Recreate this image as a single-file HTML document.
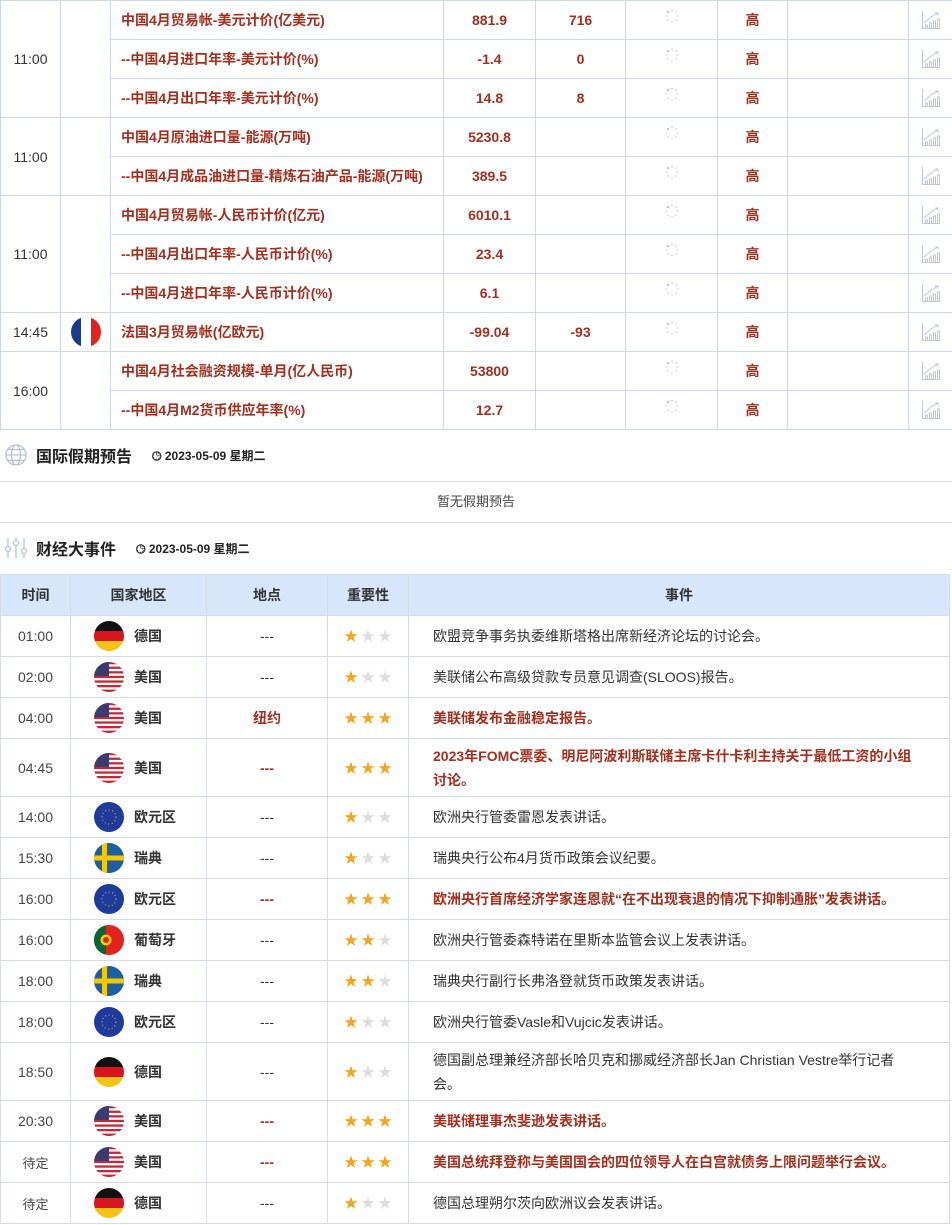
<!DOCTYPE html>
<html><head><meta charset="utf-8"><style>
*{margin:0;padding:0;box-sizing:border-box}
body{width:952px;height:1225px;overflow:hidden;background:#fff;font-family:"Liberation Sans","Noto Sans CJK SC",sans-serif;color:#333}
table{border-collapse:collapse;table-layout:fixed}
svg{vertical-align:middle}
.t1 td{border:1px solid #cdd7e6;height:39px;font-size:14px;text-align:center;color:#a3301f;font-weight:bold;padding:0;vertical-align:middle;line-height:16px}
.t1 td.n{text-align:left;padding-left:10px}
.t1 td.tm{color:#333;font-weight:normal;font-size:14px}
.t1 td svg{display:block;margin:0 auto}
.t1 td.sp svg{position:relative;top:-4px}
.t2 td,.t2 th{border:1px solid #d5dce6;font-size:14px;text-align:center;padding:0;vertical-align:middle}
.t2 th{background:#d6e6fb;height:41px;font-weight:bold;color:#333;font-size:14px}
.t2 td{height:41px}
.t2 td.tm{font-size:14px;color:#444}
.t2 td.ev{text-align:left;padding-left:24px;line-height:24px;padding-right:36px}
.t2 .r{color:#a3301f;font-weight:bold}
.cf{display:flex;align-items:center;padding-left:23px}
.fl{width:30px;height:30px;margin-right:10px;flex:none}
.cc{font-weight:bold;font-size:14px}
.st{font-size:16px;letter-spacing:3px;padding-left:3px!important}
.g{color:#f4a51c}.e{color:#ddd}
.hd{position:absolute;left:0;display:flex;align-items:center}
.hd b{font-size:16px;color:#222;margin-left:8px}
.hd span{font-size:12px;font-weight:bold;color:#222;margin-left:20px}
</style></head><body>
<svg width="0" height="0" style="position:absolute">
<defs>
<clipPath id="c"><circle cx="15" cy="15" r="15"/></clipPath>
<symbol id="de" viewBox="0 0 30 30"><g clip-path="url(#c)"><rect width="30" height="10" fill="#111"/><rect y="10" width="30" height="10" fill="#d8141c"/><rect y="20" width="30" height="10" fill="#f3c316"/></g></symbol>
<symbol id="us" viewBox="0 0 30 30"><g clip-path="url(#c)"><rect width="30" height="30" fill="#fff"/><rect y="0" width="30" height="2.3" fill="#c22a3a"/><rect y="4.6" width="30" height="2.3" fill="#c22a3a"/><rect y="9.2" width="30" height="2.3" fill="#c22a3a"/><rect y="13.8" width="30" height="2.3" fill="#c22a3a"/><rect y="18.4" width="30" height="2.3" fill="#c22a3a"/><rect y="23" width="30" height="2.3" fill="#c22a3a"/><rect y="27.6" width="30" height="2.4" fill="#c22a3a"/><rect width="15" height="14" fill="#3c3b6e"/></g></symbol>
<symbol id="eu" viewBox="0 0 30 30"><circle cx="15" cy="15" r="15" fill="#1d3a9c"/><circle cx="15" cy="15" r="7" fill="none" stroke="#f5d000" stroke-width="1" stroke-dasharray="1 2.6"/></symbol>
<symbol id="se" viewBox="0 0 30 30"><g clip-path="url(#c)"><rect width="30" height="30" fill="#1d5fa0"/><rect x="8" width="5" height="30" fill="#f6c800"/><rect y="12.5" width="30" height="5" fill="#f6c800"/></g></symbol>
<symbol id="pt" viewBox="0 0 30 30"><g clip-path="url(#c)"><rect width="30" height="30" fill="#e4211c"/><rect width="12" height="30" fill="#06683a"/><circle cx="12" cy="15" r="5.5" fill="#f5d000"/><circle cx="12" cy="15" r="3" fill="#e4211c"/></g></symbol>
<symbol id="fr" viewBox="0 0 30 30"><g clip-path="url(#c)"><rect width="10" height="30" fill="#1d3a8c"/><rect x="10" width="10" height="30" fill="#fff"/><rect x="20" width="10" height="30" fill="#e4211c"/></g></symbol>
<symbol id="sp" viewBox="0 0 14 14"><g fill="#c3ccd8"><circle cx="7" cy="1.5" r=".9"/><circle cx="11" cy="3" r=".8"/><circle cx="12.5" cy="7" r=".8"/><circle cx="11" cy="11" r=".8"/><circle cx="7" cy="12.5" r=".8"/><circle cx="3" cy="11" r=".8"/><circle cx="1.5" cy="7" r=".8"/><circle cx="3" cy="3" r=".9" fill="#8f9bb0"/></g></symbol>
<symbol id="ch" viewBox="0 0 20 20"><g fill="none" stroke="#bcc8da" stroke-width="1"><path d="M1.5 1V18.5H19"/><path d="M3 13L10 7L17 3M14 3H17V6"/><path d="M4.5 18V15H6.5V18M8.5 18V13H10.5V18M12.5 18V11H14.5V18M16.5 18V9H18.5V18"/></g></symbol>
</defs></svg>

<table class="t1" style="position:absolute;left:0;top:0;width:952px">
<colgroup><col style="width:60px"><col style="width:50px"><col style="width:333px"><col style="width:92px"><col style="width:90px"><col style="width:92px"><col style="width:70px"><col style="width:121px"><col style="width:44px"></colgroup>
<tr><td class="tm" rowspan="3">11:00</td><td rowspan="3"></td><td class="n">中国4月贸易帐-美元计价(亿美元)</td><td>881.9</td><td>716</td><td class="sp"><svg width="14" height="14"><use href="#sp"/></svg></td><td>高</td><td></td><td><svg width="20" height="20"><use href="#ch"/></svg></td></tr>
<tr><td class="n">--中国4月进口年率-美元计价(%)</td><td>-1.4</td><td>0</td><td class="sp"><svg width="14" height="14"><use href="#sp"/></svg></td><td>高</td><td></td><td><svg width="20" height="20"><use href="#ch"/></svg></td></tr>
<tr><td class="n">--中国4月出口年率-美元计价(%)</td><td>14.8</td><td>8</td><td class="sp"><svg width="14" height="14"><use href="#sp"/></svg></td><td>高</td><td></td><td><svg width="20" height="20"><use href="#ch"/></svg></td></tr>
<tr><td class="tm" rowspan="2">11:00</td><td rowspan="2"></td><td class="n">中国4月原油进口量-能源(万吨)</td><td>5230.8</td><td></td><td class="sp"><svg width="14" height="14"><use href="#sp"/></svg></td><td>高</td><td></td><td><svg width="20" height="20"><use href="#ch"/></svg></td></tr>
<tr><td class="n">--中国4月成品油进口量-精炼石油产品-能源(万吨)</td><td>389.5</td><td></td><td class="sp"><svg width="14" height="14"><use href="#sp"/></svg></td><td>高</td><td></td><td><svg width="20" height="20"><use href="#ch"/></svg></td></tr>
<tr><td class="tm" rowspan="3">11:00</td><td rowspan="3"></td><td class="n">中国4月贸易帐-人民币计价(亿元)</td><td>6010.1</td><td></td><td class="sp"><svg width="14" height="14"><use href="#sp"/></svg></td><td>高</td><td></td><td><svg width="20" height="20"><use href="#ch"/></svg></td></tr>
<tr><td class="n">--中国4月出口年率-人民币计价(%)</td><td>23.4</td><td></td><td class="sp"><svg width="14" height="14"><use href="#sp"/></svg></td><td>高</td><td></td><td><svg width="20" height="20"><use href="#ch"/></svg></td></tr>
<tr><td class="n">--中国4月进口年率-人民币计价(%)</td><td>6.1</td><td></td><td class="sp"><svg width="14" height="14"><use href="#sp"/></svg></td><td>高</td><td></td><td><svg width="20" height="20"><use href="#ch"/></svg></td></tr>
<tr><td class="tm">14:45</td><td><svg width="30" height="30"><use href="#fr"/></svg></td><td class="n">法国3月贸易帐(亿欧元)</td><td>-99.04</td><td>-93</td><td class="sp"><svg width="14" height="14"><use href="#sp"/></svg></td><td>高</td><td></td><td><svg width="20" height="20"><use href="#ch"/></svg></td></tr>
<tr><td class="tm" rowspan="2">16:00</td><td rowspan="2"></td><td class="n">中国4月社会融资规模-单月(亿人民币)</td><td>53800</td><td></td><td class="sp"><svg width="14" height="14"><use href="#sp"/></svg></td><td>高</td><td></td><td><svg width="20" height="20"><use href="#ch"/></svg></td></tr>
<tr><td class="n">--中国4月M2货币供应年率(%)</td><td>12.7</td><td></td><td class="sp"><svg width="14" height="14"><use href="#sp"/></svg></td><td>高</td><td></td><td><svg width="20" height="20"><use href="#ch"/></svg></td></tr>
</table>

<div class="hd" style="top:443px;left:4px"><svg width="24" height="24" viewBox="0 0 24 24" fill="none" stroke="#b5c3d8" stroke-width="1.3"><circle cx="12" cy="12" r="10"/><ellipse cx="12" cy="12" rx="4.5" ry="10"/><path d="M2 12H22M4 6.5H20M4 17.5H20"/></svg><b>国际假期预告</b><span>🕒︎ 2023-05-09 星期二</span></div>
<div style="position:absolute;left:0;top:481px;width:952px;height:42px;border-top:1px solid #d5dce6;border-bottom:1px solid #d5dce6;text-align:center;line-height:40px;font-size:13px;color:#444">暂无假期预告</div>
<div class="hd" style="top:536px;left:4px"><svg width="24" height="24" viewBox="0 0 24 24" fill="none" stroke="#b5c3d8" stroke-width="1.3"><path d="M4 2V10M4 16V22M12 2V4M12 10V22M20 2V12M20 18V22"/><circle cx="4" cy="13" r="2.5"/><circle cx="12" cy="7" r="2.5"/><circle cx="20" cy="15" r="2.5"/></svg><b>财经大事件</b><span>🕒︎ 2023-05-09 星期二</span></div>

<table class="t2" style="position:absolute;left:0;top:574px;width:950px">
<colgroup><col style="width:70px"><col style="width:136px"><col style="width:121px"><col style="width:81px"><col></colgroup>
<tr><th>时间</th><th>国家地区</th><th>地点</th><th>重要性</th><th>事件</th></tr>
<tr><td class="tm">01:00</td><td><div class="cf"><svg class="fl"><use href="#de"/></svg><span class="cc">德国</span></div></td><td>---</td><td class="st"><span class="g">★</span><span class="e">★★</span></td><td class="ev">欧盟竞争事务执委维斯塔格出席新经济论坛的讨论会。</td></tr>
<tr><td class="tm">02:00</td><td><div class="cf"><svg class="fl"><use href="#us"/></svg><span class="cc">美国</span></div></td><td>---</td><td class="st"><span class="g">★</span><span class="e">★★</span></td><td class="ev">美联储公布高级贷款专员意见调查(SLOOS)报告。</td></tr>
<tr><td class="tm">04:00</td><td><div class="cf"><svg class="fl"><use href="#us"/></svg><span class="cc">美国</span></div></td><td class="r">纽约</td><td class="st"><span class="g">★★★</span></td><td class="ev r">美联储发布金融稳定报告。</td></tr>
<tr><td class="tm" style="height:58px">04:45</td><td><div class="cf"><svg class="fl"><use href="#us"/></svg><span class="cc">美国</span></div></td><td class="r">---</td><td class="st"><span class="g">★★★</span></td><td class="ev r">2023年FOMC票委、明尼阿波利斯联储主席卡什卡利主持关于最低工资的小组讨论。</td></tr>
<tr><td class="tm">14:00</td><td><div class="cf"><svg class="fl"><use href="#eu"/></svg><span class="cc">欧元区</span></div></td><td>---</td><td class="st"><span class="g">★</span><span class="e">★★</span></td><td class="ev">欧洲央行管委雷恩发表讲话。</td></tr>
<tr><td class="tm">15:30</td><td><div class="cf"><svg class="fl"><use href="#se"/></svg><span class="cc">瑞典</span></div></td><td>---</td><td class="st"><span class="g">★</span><span class="e">★★</span></td><td class="ev">瑞典央行公布4月货币政策会议纪要。</td></tr>
<tr><td class="tm">16:00</td><td><div class="cf"><svg class="fl"><use href="#eu"/></svg><span class="cc">欧元区</span></div></td><td class="r">---</td><td class="st"><span class="g">★★★</span></td><td class="ev r">欧洲央行首席经济学家连恩就“在不出现衰退的情况下抑制通胀”发表讲话。</td></tr>
<tr><td class="tm">16:00</td><td><div class="cf"><svg class="fl"><use href="#pt"/></svg><span class="cc">葡萄牙</span></div></td><td>---</td><td class="st"><span class="g">★★</span><span class="e">★</span></td><td class="ev">欧洲央行管委森特诺在里斯本监管会议上发表讲话。</td></tr>
<tr><td class="tm">18:00</td><td><div class="cf"><svg class="fl"><use href="#se"/></svg><span class="cc">瑞典</span></div></td><td>---</td><td class="st"><span class="g">★★</span><span class="e">★</span></td><td class="ev">瑞典央行副行长弗洛登就货币政策发表讲话。</td></tr>
<tr><td class="tm">18:00</td><td><div class="cf"><svg class="fl"><use href="#eu"/></svg><span class="cc">欧元区</span></div></td><td>---</td><td class="st"><span class="g">★</span><span class="e">★★</span></td><td class="ev">欧洲央行管委Vasle和Vujcic发表讲话。</td></tr>
<tr><td class="tm" style="height:58px">18:50</td><td><div class="cf"><svg class="fl"><use href="#de"/></svg><span class="cc">德国</span></div></td><td>---</td><td class="st"><span class="g">★</span><span class="e">★★</span></td><td class="ev">德国副总理兼经济部长哈贝克和挪威经济部长Jan Christian Vestre举行记者会。</td></tr>
<tr><td class="tm">20:30</td><td><div class="cf"><svg class="fl"><use href="#us"/></svg><span class="cc">美国</span></div></td><td class="r">---</td><td class="st"><span class="g">★★★</span></td><td class="ev r">美联储理事杰斐逊发表讲话。</td></tr>
<tr><td class="tm" style="font-size:13px">待定</td><td><div class="cf"><svg class="fl"><use href="#us"/></svg><span class="cc">美国</span></div></td><td class="r">---</td><td class="st"><span class="g">★★★</span></td><td class="ev r">美国总统拜登称与美国国会的四位领导人在白宫就债务上限问题举行会议。</td></tr>
<tr><td class="tm" style="font-size:13px">待定</td><td><div class="cf"><svg class="fl"><use href="#de"/></svg><span class="cc">德国</span></div></td><td>---</td><td class="st"><span class="g">★</span><span class="e">★★</span></td><td class="ev">德国总理朔尔茨向欧洲议会发表讲话。</td></tr>
</table>
</body></html>
